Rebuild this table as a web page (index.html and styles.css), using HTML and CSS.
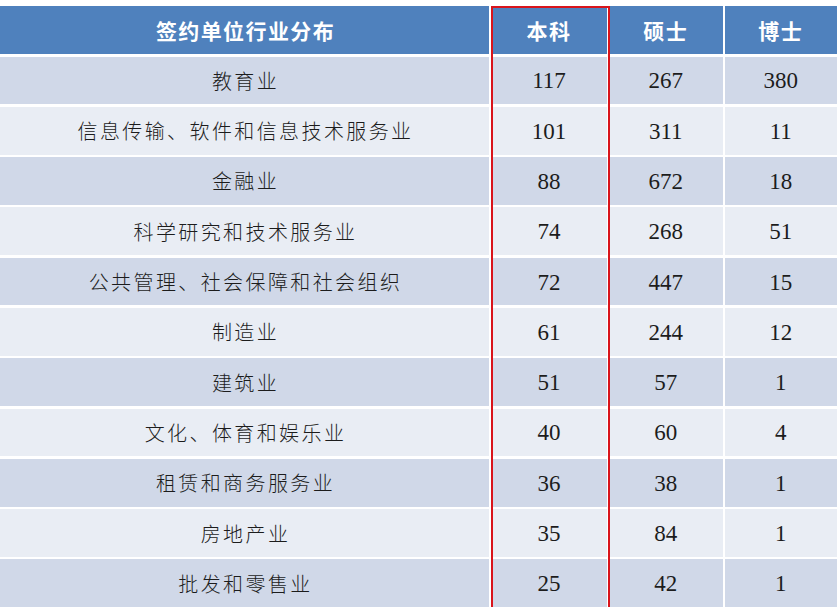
FILE: index.html
```html
<!DOCTYPE html>
<html lang="zh">
<head>
<meta charset="utf-8">
<title>签约单位行业分布</title>
<link rel="stylesheet" href="styles.css">
</head>
<body>
<div class="wrap">
  <div class="grid">
    <div class="cell head name">签约单位行业分布</div>
    <div class="cell head">本科</div>
    <div class="cell head">硕士</div>
    <div class="cell head">博士</div>

    <div class="cell a name">教育业</div><div class="cell a num">117</div><div class="cell a num">267</div><div class="cell a num">380</div>
    <div class="cell b name">信息传输、软件和信息技术服务业</div><div class="cell b num">101</div><div class="cell b num">311</div><div class="cell b num">11</div>
    <div class="cell a name">金融业</div><div class="cell a num">88</div><div class="cell a num">672</div><div class="cell a num">18</div>
    <div class="cell b name">科学研究和技术服务业</div><div class="cell b num">74</div><div class="cell b num">268</div><div class="cell b num">51</div>
    <div class="cell a name">公共管理、社会保障和社会组织</div><div class="cell a num">72</div><div class="cell a num">447</div><div class="cell a num">15</div>
    <div class="cell b name">制造业</div><div class="cell b num">61</div><div class="cell b num">244</div><div class="cell b num">12</div>
    <div class="cell a name">建筑业</div><div class="cell a num">51</div><div class="cell a num">57</div><div class="cell a num">1</div>
    <div class="cell b name">文化、体育和娱乐业</div><div class="cell b num">40</div><div class="cell b num">60</div><div class="cell b num">4</div>
    <div class="cell a name">租赁和商务服务业</div><div class="cell a num">36</div><div class="cell a num">38</div><div class="cell a num">1</div>
    <div class="cell b name">房地产业</div><div class="cell b num">35</div><div class="cell b num">84</div><div class="cell b num">1</div>
    <div class="cell a name">批发和零售业</div><div class="cell a num">25</div><div class="cell a num">42</div><div class="cell a num">1</div>
  </div>
  <div class="highlight"></div>
</div>
</body>
</html>
```

FILE: styles.css
```css
html, body {
  margin: 0;
  padding: 0;
  background: #ffffff;
  overflow: hidden;
}

.wrap {
  position: relative;
  width: 837px;
  margin-top: 6px;
}

.grid {
  display: grid;
  grid-template-columns: 489px 115px 113.5px 111.5px;
  grid-template-rows: 48px;
  grid-auto-rows: 47.8px;
  column-gap: 2.5px;
  row-gap: 2.5px;
}

.cell {
  display: flex;
  align-items: center;
  justify-content: center;
  color: #1c1c1c;
  white-space: nowrap;
}

.head {
  background: #4f81bd;
  color: #ffffff;
  font-family: "Noto Sans CJK SC", sans-serif;
  font-weight: 700;
  font-size: 21px;
  letter-spacing: 1.4px;
}

.a {
  background: #d0d8e8;
}

.b {
  background: #e9edf4;
}

.name {
  font-family: "Noto Sans CJK SC", sans-serif;
  font-weight: 300;
  font-size: 20px;
  letter-spacing: 2.4px;
  padding-left: 2px;
}

.head.name {
  font-weight: 700;
  font-size: 21px;
  letter-spacing: 1.4px;
}

.num {
  font-family: "Liberation Serif", serif;
  font-size: 23px;
  padding-top: 2px;
}

.highlight {
  position: absolute;
  left: 491px;
  top: 0;
  width: 115px;
  bottom: -2px;
  border: 2px solid #d9141b;
  pointer-events: none;
}
```
